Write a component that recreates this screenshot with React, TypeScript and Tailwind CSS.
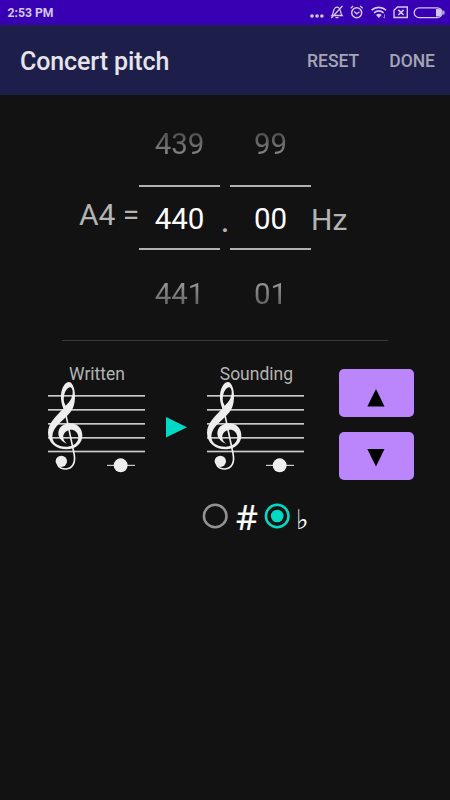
import React from "react";

function StatusIcons() {
  return (
    <svg width="145" height="25" viewBox="0 0 145 25" fill="none" stroke="#d3c6ef" strokeWidth="1.3">
      <g fill="#d3c6ef" stroke="none">
        <circle cx="7" cy="16" r="1.8" />
        <circle cx="12" cy="16" r="1.8" />
        <circle cx="16.9" cy="16" r="1.8" />
      </g>
      <path d="M27 15.5C28.8 13.8 27.8 7.2 32 7.2S35.2 13.8 37 15.5ZM30.5 17.7H33.5M26.3 18L37.5 6" />
      <circle cx="51.7" cy="12.7" r="5" strokeWidth="1.5" />
      <path d="M49.2 11.5L51.7 13.8L54.5 11.8M45.7 8.2L48.2 6.1M57.7 8.2L55.2 6.1" />
      <path d="M66.6 10.2C70.8 6.3 76.8 6.3 81 10.2M69 12.9C72 10.3 75.7 10.3 78.6 12.9" strokeWidth="1.7" />
      <path d="M71 15C72.8 13.4 75 13.4 76.6 15L73.8 18Z" fill="#d3c6ef" stroke="none" />
      <path d="M79.5 14V18M77.8 16.6L79.5 18.3" strokeWidth="1" opacity=".55" />
      <path d="M92.5 7H102.3V17.5H89V10.3Z" strokeWidth="1.4" />
      <path d="M93.3 9.8L98.6 15M98.6 9.8L93.3 15" strokeWidth="1.7" />
      <rect x="109.2" y="7.8" width="28" height="9.8" rx="4.9" />
      <path d="M131 9H133A3.7 3.7 0 0 1 133 16.4H131Z" fill="#d3c6ef" stroke="none" />
      <path d="M138.8 10.8V14.6" />
    </svg>
  );
}

function Staff() {
  return (
    <svg className="block" width="98" height="94" viewBox="0 0 294 282">
      <g fill="#c9cbc9">
        <rect x="0" y="45" width="291" height="5" />
        <rect x="0" y="87" width="291" height="5" />
        <rect x="0" y="129" width="291" height="5" />
        <rect x="0" y="171" width="291" height="5" />
        <rect x="0" y="212" width="291" height="5" />
      </g>
      <path
        fill="#eeeeee"
        fillRule="evenodd"
        d="M46 86C41 72 38 60 39 46C40 24 51 6 63 6C74 6 81 28 81 47C81 70 77 84 67 97C47 122 14 140 13 169C13 190 30 201 58 200C78 199 91 187 91 171C90 156 79 148 67 149C51 151 42 166 47 178C49 184 53 188 57 191C45 188 31 176 31 160C31 143 46 130 67 130C88 130 103 146 103 166C103 191 84 208 56 208C24 208 0 188 0 158C0 130 23 109 46 86ZM53 77C67 65 75 50 74 34C73 27 71 22 66 22C54 24 45 44 48 66Z"
      />
      <path d="M51 92L78 220C84 249 73 266 54 267C44 267 34 263 30 256" fill="none" stroke="#eeeeee" strokeWidth="5" />
      <circle cx="40" cy="244" r="17" fill="#eeeeee" />
      <path d="M177 256H261" stroke="#eeeeee" strokeWidth="3" />
      <circle cx="218" cy="256" r="21" fill="#eeeeee" />
    </svg>
  );
}

function Picker({ before, value, after }: { before: string; value: string; after: string }) {
  return (
    <div className="flex w-[81px] flex-col text-center text-[29.5px] leading-[34px]">
      <div className="h-[58px] bg-gradient-to-b from-[#505050] from-10% to-[#999] to-60% bg-clip-text text-transparent">{before}</div>
      <div className="flex h-[65px] items-center justify-center border-y-[2.5px] border-[#b1b1b1] pt-[3px] text-white">{value}</div>
      <div className="mt-[27px] bg-gradient-to-b from-[#999] from-15% to-[#555] bg-clip-text text-transparent">{after}</div>
    </div>
  );
}

function StepButton({ down = false }: { down?: boolean }) {
  return (
    <button className="flex h-12 w-[75px] shrink-0 items-start justify-center rounded-[5px] bg-[#bb86fc]">
      <svg className={down ? "mt-[17px]" : "mt-5"} width="18" height="18" viewBox="0 0 18 18">
        <path d={down ? "M.3 0H17.5L9 17.6Z" : "M.3 17.6H17.5L9 0Z"} />
      </svg>
    </button>
  );
}

function Radio({ on = false }: { on?: boolean }) {
  return (
    <svg className="-mt-[3px]" width="26" height="26" viewBox="0 0 26 26" fill="none">
      <circle cx="13.2" cy="13" r="11.3" stroke={on ? "#03dac5" : "#929292"} strokeWidth="2.5" />
      {on && <circle cx="13.2" cy="13" r="6.3" fill="#03dac5" />}
    </svg>
  );
}

export default function App() {
  return (
    <div className="flex h-[800px] w-[450px] flex-col overflow-hidden bg-[#121212] font-['Roboto',sans-serif] text-[#b4b4b4]">
      <div className="flex h-[25px] shrink-0 items-center justify-between bg-[#3700b3] pl-[7.5px] text-[12.2px] font-bold text-[#d3c6ef]">
        <span className="pt-px">2:53 PM</span>
        <StatusIcons />
      </div>
      <header className="flex h-[70px] shrink-0 items-center bg-[#1e1e4b] pr-[15px] pt-0.5">
        <h1 className="flex-1 pl-5 pt-px text-[25px] font-medium tracking-[-0.1px] text-[#e4e4e9]">Concert pitch</h1>
        <div className="flex gap-[30px] text-[17.5px] font-medium text-[#a5a5b7]">
          <span>RESET</span>
          <span>DONE</span>
        </div>
      </header>

      <section className="mt-8 flex h-[184px] shrink-0 pl-[79px] text-[30px] leading-[35px]">
        <span className="w-[60px] whitespace-nowrap pt-[70px]">A4 =</span>
        <Picker before="439" value="440" after="441" />
        <span className="flex w-[10px] justify-center pt-[76px] text-[35px]">.</span>
        <Picker before="99" value="00" after="01" />
        <span className="pt-[75px]">Hz</span>
      </section>

      <div className="ml-[62px] mt-[29px] h-px w-[326px] shrink-0 bg-[#393939]" />

      <section className="mt-[23px] flex h-[115px] shrink-0 pl-12">
        <div className="w-[98px]">
          <div className="h-4 text-center text-[17.5px] leading-[20px]">Written</div>
          <Staff />
        </div>
        <svg className="ml-5 mt-[53px]" width="22" height="21" viewBox="0 0 22 21">
          <path d="M0 0V20.5L21 10.3Z" fill="#03dac5" />
        </svg>
        <div className="ml-[19.4px] w-[98px]">
          <div className="h-4 text-center text-[17.5px] leading-[20px]">Sounding</div>
          <Staff />
        </div>
        <div className="ml-[33.2px] mt-[4.5px] flex flex-col gap-[15px]">
          <StepButton />
          <StepButton down />
        </div>
      </section>

      <section className="mt-[18px] flex h-[40px] shrink-0 items-center pl-[202px] text-white">
        <Radio />
        <span className="ml-2 w-7 font-['Noto_Sans',sans-serif] text-[34px] leading-[38px] [-webkit-text-stroke:0.2px_white]">#</span>
        <Radio on />
        <span className="ml-[6px] pt-[6px] font-['DejaVu_Sans',sans-serif] text-[27px] leading-[40px]">♭</span>
      </section>
    </div>
  );
}
